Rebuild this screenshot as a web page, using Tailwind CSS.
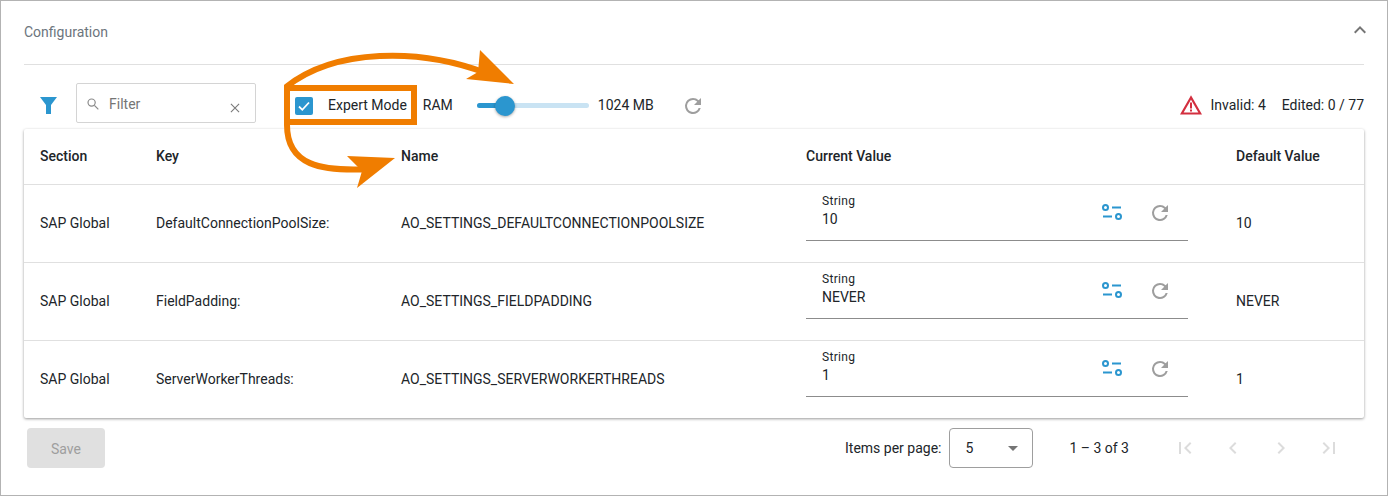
<!DOCTYPE html>
<html lang="en">
<head>
    <meta charset="UTF-8">
    <title>Configuration</title>
    <script src="https://cdn.jsdelivr.net/npm/@tailwindcss/browser@4"></script>
</head>
<body class="font-['Roboto',sans-serif] text-[14px] text-[#212529] bg-white">
<div class="relative w-[1388px] h-[496px] overflow-hidden border border-[#b3b3b3]">

    <!-- header -->
    <div class="mx-[23px] h-[64px] border-b border-[#e0e0e0] flex items-center justify-between">
        <span class="text-[#6c757d]">Configuration</span>
        <svg class="mr-[-8px] mb-[5px]" width="24" height="24" viewBox="0 0 24 24" fill="#757575"><path d="M7.41 15.41 12 10.83l4.59 4.58L18 14l-6-6-6 6z"/></svg>
    </div>

    <!-- toolbar -->
    <div class="mx-[23px] h-[63px] pt-[18px] flex items-center relative">
        <svg class="ml-[16px]" width="17" height="17" viewBox="0 0 17 17" fill="#2b96cf"><path d="M0 0h17l-6 8v9H6V8z"/></svg>
        <div class="ml-[19px] mb-[6px] w-[180px] h-[40px] border border-[#d4d4d4] rounded-[2px] flex items-center relative">
            <svg class="ml-[10px] mt-[3px]" width="12" height="12" viewBox="0 0 13 13" fill="none" stroke="#8a8a8a" stroke-width="1.300"><circle cx="5" cy="5" r="3.900"/><path d="m8 8 4.300 4.300"/></svg>
            <span class="ml-[10px] mt-[4px] text-[#757575]">Filter</span>
            <svg class="absolute right-[15px] top-[19px]" width="10" height="10" viewBox="0 0 11 11" stroke="#7a7a7a" stroke-width="1.200"><path d="m1 1 9 9M10 1l-9 9"/></svg>
        </div>
        <div class="ml-[39px] w-[18px] h-[18px] bg-[#2b96cf] rounded-[2px] flex items-center justify-center">
            <svg width="14" height="14" viewBox="0 0 14 14" fill="none" stroke="#fff" stroke-width="1.800"><path d="m2 7.500 3.300 3.300L12 3.500"/></svg>
        </div>
        <span class="ml-[15px]">Expert Mode</span>
        <span class="ml-[16px]">RAM</span>
        <div class="ml-[24px] w-[112px] h-[5px] rounded-full bg-[#c9e3f3] relative">
            <div class="w-[28px] h-[5px] rounded-full bg-[#2b96cf]"></div>
            <div class="absolute left-[18px] top-[-7px] w-[20px] h-[20px] rounded-full bg-[#2b96cf] shadow-[0_1px_3px_rgba(0,0,0,0.35)]"></div>
        </div>
        <span class="ml-[9px]">1024 MB</span>
        <svg class="ml-[27px]" width="24" height="24" viewBox="0 0 24 24" fill="#9e9e9e"><path d="M17.650 6.350A7.960 7.960 0 0 0 12 4a8 8 0 1 0 7.730 10h-2.080A6 6 0 1 1 12 6c1.660 0 3.140.69 4.220 1.780L13 11h7V4z"/></svg>
        <div class="ml-auto flex items-center">
            <svg class="ml-[-1px] mt-[-2px]" width="22" height="20" viewBox="0 0 22 20"><path d="M11 2.500 1.800 18.500h18.400z" fill="none" stroke="#d32f3f" stroke-width="2.200"/><path d="M10 7.500h2v6h-2zM10 14.500h2v2h-2z" fill="#d32f3f"/></svg>
            <span class="ml-[9px]">Invalid: 4</span>
            <span class="ml-[16px]">Edited: 0 / 77</span>
        </div>
    </div>

    <!-- table -->
    <div class="mx-[23px] mt-[1px] bg-white rounded-[2px] shadow-[0_1px_3px_rgba(0,0,0,0.4)]">
        <div class="grid grid-cols-[116px_245px_405px_430px_1fr] h-[56px] items-center border-b border-[#e0e0e0] pl-[16px] font-medium">
            <div>Section</div>
            <div>Key</div>
            <div>Name</div>
            <div>Current Value</div>
            <div>Default Value</div>
        </div>

        <div class="grid grid-cols-[116px_245px_405px_430px_1fr] h-[78px] items-center border-b border-[#e0e0e0] pl-[16px]">
            <div>SAP Global</div>
            <div>DefaultConnectionPoolSize:</div>
            <div>AO_SETTINGS_DEFAULTCONNECTIONPOOLSIZE</div>
            <div class="self-start w-[382px] h-[56px] border-b border-[#8c8c8c] relative">
                <div class="pl-[16px] pt-[9px] text-[12px] leading-[14px] tracking-[0.3px]">String</div>
                <div class="pl-[16px] pt-[1px] leading-[20px]">10</div>
                <svg class="absolute left-[296px] top-[19px]" width="20" height="16" viewBox="0 0 20 16" fill="none" stroke="#2b96cf" stroke-width="2"><circle cx="3.500" cy="3.500" r="2.500"/><path d="M10 3.500h9M1 12.500h9"/><circle cx="16.500" cy="12.500" r="2.500"/></svg>
                <svg class="absolute left-[342px] top-[16px]" width="24" height="24" viewBox="0 0 24 24" fill="#9e9e9e"><path d="M17.650 6.350A7.960 7.960 0 0 0 12 4a8 8 0 1 0 7.730 10h-2.080A6 6 0 1 1 12 6c1.660 0 3.140.69 4.220 1.780L13 11h7V4z"/></svg>
            </div>
            <div>10</div>
        </div>

        <div class="grid grid-cols-[116px_245px_405px_430px_1fr] h-[78px] items-center border-b border-[#e0e0e0] pl-[16px]">
            <div>SAP Global</div>
            <div>FieldPadding:</div>
            <div>AO_SETTINGS_FIELDPADDING</div>
            <div class="self-start w-[382px] h-[56px] border-b border-[#8c8c8c] relative">
                <div class="pl-[16px] pt-[9px] text-[12px] leading-[14px] tracking-[0.3px]">String</div>
                <div class="pl-[16px] pt-[1px] leading-[20px]">NEVER</div>
                <svg class="absolute left-[296px] top-[19px]" width="20" height="16" viewBox="0 0 20 16" fill="none" stroke="#2b96cf" stroke-width="2"><circle cx="3.500" cy="3.500" r="2.500"/><path d="M10 3.500h9M1 12.500h9"/><circle cx="16.500" cy="12.500" r="2.500"/></svg>
                <svg class="absolute left-[342px] top-[16px]" width="24" height="24" viewBox="0 0 24 24" fill="#9e9e9e"><path d="M17.650 6.350A7.960 7.960 0 0 0 12 4a8 8 0 1 0 7.730 10h-2.080A6 6 0 1 1 12 6c1.660 0 3.140.69 4.220 1.780L13 11h7V4z"/></svg>
            </div>
            <div>NEVER</div>
        </div>

        <div class="grid grid-cols-[116px_245px_405px_430px_1fr] h-[77px] items-center pl-[16px]">
            <div>SAP Global</div>
            <div>ServerWorkerThreads:</div>
            <div>AO_SETTINGS_SERVERWORKERTHREADS</div>
            <div class="self-start w-[382px] h-[56px] border-b border-[#8c8c8c] relative">
                <div class="pl-[16px] pt-[9px] text-[12px] leading-[14px] tracking-[0.3px]">String</div>
                <div class="pl-[16px] pt-[1px] leading-[20px]">1</div>
                <svg class="absolute left-[296px] top-[19px]" width="20" height="16" viewBox="0 0 20 16" fill="none" stroke="#2b96cf" stroke-width="2"><circle cx="3.500" cy="3.500" r="2.500"/><path d="M10 3.500h9M1 12.500h9"/><circle cx="16.500" cy="12.500" r="2.500"/></svg>
                <svg class="absolute left-[342px] top-[16px]" width="24" height="24" viewBox="0 0 24 24" fill="#9e9e9e"><path d="M17.650 6.350A7.960 7.960 0 0 0 12 4a8 8 0 1 0 7.730 10h-2.080A6 6 0 1 1 12 6c1.660 0 3.140.69 4.220 1.780L13 11h7V4z"/></svg>
            </div>
            <div>1</div>
        </div>
    </div>

    <!-- footer -->
    <div class="mx-[23px] mt-[10px] flex items-center">
        <div class="ml-[3px] w-[78px] h-[40px] pt-[2px] bg-[#e0e0e0] rounded-[4px] flex items-center justify-center text-[#9e9e9e]">Save</div>
        <span class="ml-auto pt-[1px]">Items per page:</span>
        <div class="ml-[8px] w-[84px] h-[40px] border border-[#9e9e9e] rounded-[4px] flex items-center justify-between pl-[15px] pr-[14px]">
            <span>5</span>
            <div class="w-0 h-0 border-x-[5px] border-x-transparent border-t-[5px] border-t-[#757575]"></div>
        </div>
        <span class="ml-[36px] pt-[1px]">1 – 3 of 3</span>
        <div class="ml-[44px] mr-[23px] flex items-center gap-[24px]">
            <svg width="24" height="24" viewBox="0 0 24 24" fill="#dcdcdc"><path d="M18.410 16.590 13.820 12l4.590-4.590L17 6l-6 6 6 6zM6 6h2v12H6z"/></svg>
            <svg width="24" height="24" viewBox="0 0 24 24" fill="#dcdcdc"><path d="M15.410 7.410 14 6l-6 6 6 6 1.410-1.410L10.830 12z"/></svg>
            <svg width="24" height="24" viewBox="0 0 24 24" fill="#dcdcdc"><path d="M10 6 8.590 7.410 13.170 12l-4.580 4.590L10 18l6-6z"/></svg>
            <svg width="24" height="24" viewBox="0 0 24 24" fill="#dcdcdc"><path d="M5.590 7.410 10.180 12l-4.590 4.590L7 18l6-6-6-6zM16 6h2v12h-2z"/></svg>
        </div>
    </div>

    <!-- annotation drawn over the page -->
    <svg class="absolute left-[-1px] top-[-1px] pointer-events-none" width="1388" height="496" viewBox="0 0 1388 496" fill="none">
        <rect x="287" y="88" width="127" height="34" stroke="#f07d00" stroke-width="6"/>
        <path d="M286 87C335 48 420 48 486 73" stroke="#f07d00" stroke-width="6"/>
        <path d="M480 50 514 84 466 79 478 72z" fill="#f07d00"/>
        <path d="M287 125C287 165 320 172 372 169" stroke="#f07d00" stroke-width="6"/>
        <path d="M347 156 395 158 357 188 362 171z" fill="#f07d00"/>
    </svg>
</div>
</body>
</html>
